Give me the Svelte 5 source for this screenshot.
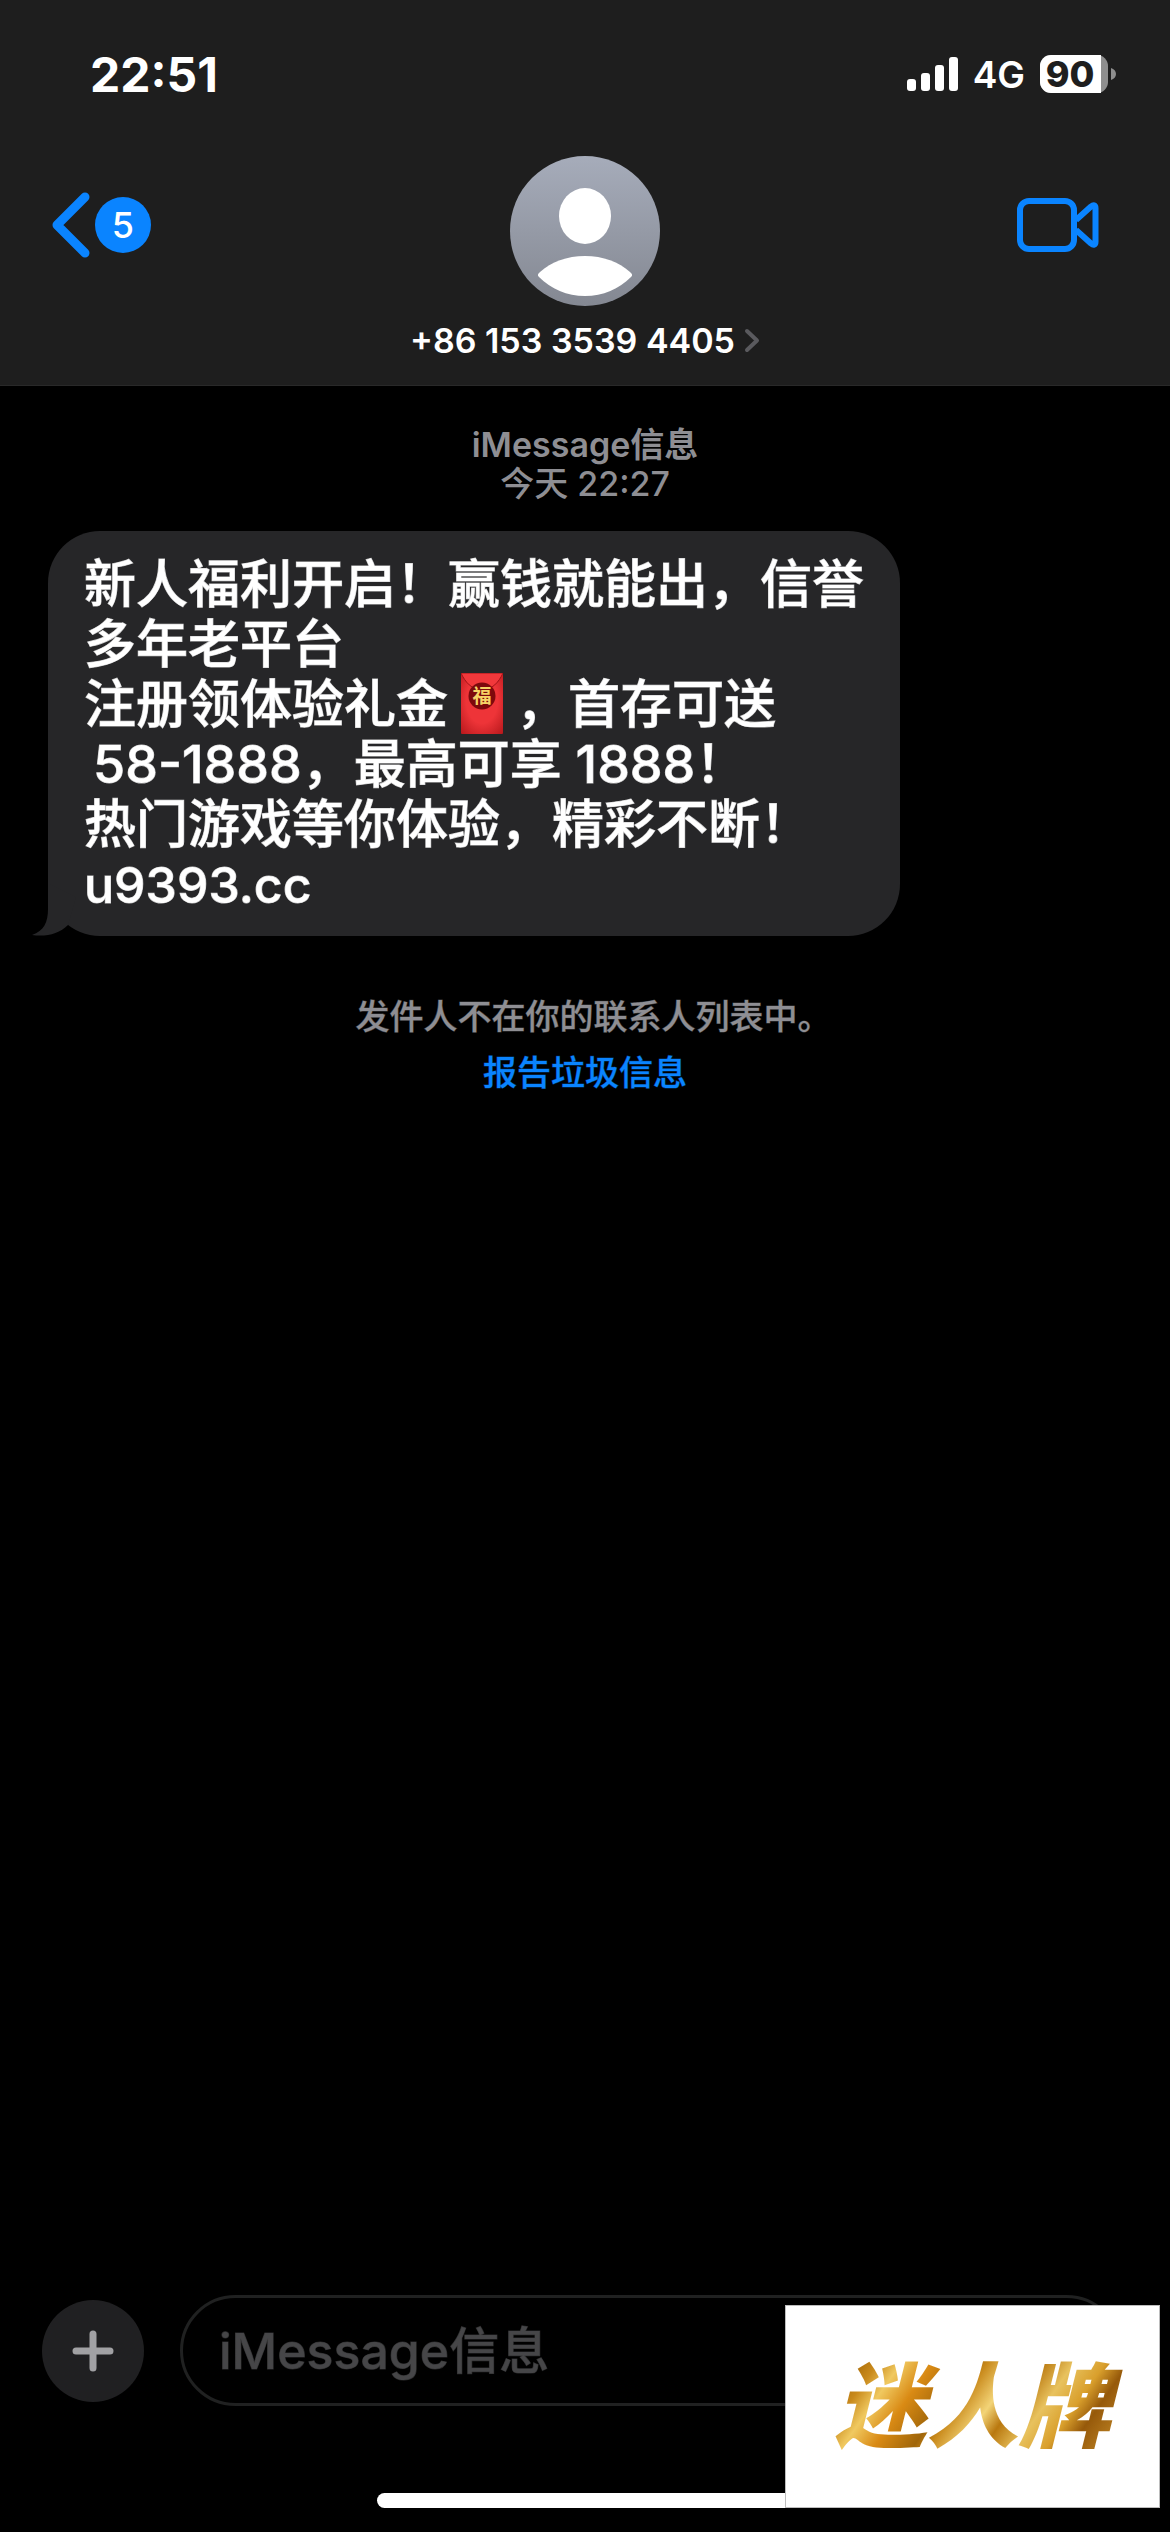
<script>
  let unread = 5;
  let battery = 90;
  let contact = "+86 153 3539 4405";
  let draft = "";

  // x offset and height of each signal bar
  const bars = [
    { x: 0, height: 12 },
    { x: 14, height: 18 },
    { x: 28, height: 26 },
    { x: 42, height: 34 },
  ];
</script>

<svelte:head>
  <title>{contact}</title>
</svelte:head>

<div class="screen" lang="zh-CN">
  <header>
    <div class="status">
      <time class="clock">22:51</time>
      <div class="indicators">
        <svg class="signal" width="51" height="34" viewBox="0 0 51 34" aria-hidden="true">
          {#each bars as bar}
            <rect x={bar.x} y={34 - bar.height} width="9" height={bar.height} rx="3" fill="#fff" />
          {/each}
        </svg>
        <span class="network">4G</span>
        <div class="battery">
          <div class="cell">
            <div class="charge" style="width: {battery}%"></div>
            <span class="level">{battery}</span>
          </div>
          <svg width="5" height="12" viewBox="0 0 5 12" aria-hidden="true">
            <path d="M0 0C3 1 5 3 5 6S3 11 0 12Z" fill="#8e8e8e" />
          </svg>
        </div>
      </div>
    </div>

    <nav>
      <button class="back" aria-label="返回">
        <svg width="40" height="66" viewBox="0 0 40 66" aria-hidden="true">
          <path
            d="M34 5 6 33 34 61"
            fill="none"
            stroke="#0a84ff"
            stroke-width="9"
            stroke-linecap="round"
            stroke-linejoin="round"
          />
        </svg>
        <span class="badge">{unread}</span>
      </button>

      <button class="contact">
        <svg class="avatar" width="150" height="150" viewBox="0 0 150 150" aria-hidden="true">
          <defs>
            <linearGradient id="avatar-fill" x1="0" y1="0" x2="0" y2="1">
              <stop offset="0" stop-color="#a6acba" />
              <stop offset="1" stop-color="#848892" />
            </linearGradient>
          </defs>
          <circle cx="75" cy="75" r="75" fill="url(#avatar-fill)" />
          <ellipse cx="75" cy="60" rx="26" ry="28" fill="#fff" />
          <path
            d="M29 121C27 119 28 118 30 116C41 106 57 100 75 100S109 106 120 116C122 118 123 119 121 121C109 133 93 140 75 140S41 133 29 121Z"
            fill="#fff"
          />
        </svg>
        <span class="name">
          {contact}
          <svg width="16" height="25" viewBox="0 0 16 25" aria-hidden="true">
            <path
              d="M3 3 13 12.500 3 22"
              fill="none"
              stroke="#5a5a5e"
              stroke-width="4"
              stroke-linecap="round"
              stroke-linejoin="round"
            />
          </svg>
        </span>
      </button>

      <button class="video" aria-label="视频通话">
        <svg width="82" height="54" viewBox="0 0 82 54" fill="none" stroke="#0a84ff" aria-hidden="true">
          <rect x="3" y="3" width="54" height="48" rx="9" stroke-width="6" />
          <path
            d="M59 22 74 8.500C76.500 6.500 78.500 7 78.500 10V44C78.500 47 76.500 47.500 74 45.500L59 32"
            stroke-width="6"
            stroke-linejoin="round"
          />
        </svg>
      </button>
    </nav>
  </header>

  <main>
    <p class="stamp"><strong>iMessage信息</strong><br />今天 22:27</p>

    <div class="bubble">
      <p>新人福利开启！赢钱就能出，信誉多年老平台</p>
      <p>
        注册领体验礼金<svg class="envelope" width="42" height="61" viewBox="0 0 42 61" role="img" aria-label="红包">
          <defs>
            <radialGradient id="envelope-fill" cx="0.5" cy="0.45" r="0.75">
              <stop offset="0.5" stop-color="#ee3438" />
              <stop offset="1" stop-color="#b5171b" />
            </radialGradient>
          </defs>
          <rect width="42" height="61" rx="1" fill="url(#envelope-fill)" />
          <path d="M0 0H42C38 9 31 17 21 17S4 9 0 0Z" fill="#f2383b" stroke="#a01216" stroke-width="1" />
          <circle cx="21" cy="23" r="13.500" fill="#7d090c" />
          <text x="21" y="30" text-anchor="middle">福</text>
        </svg>，首存可送
      </p>
      <p>&thinsp;58-1888，最高可享 1888！</p>
      <p>热门游戏等你体验，精彩不断！</p>
      <p class="domain">u9393.cc</p>
      <svg class="tail" width="44" height="53" viewBox="0 0 44 53" aria-hidden="true">
        <path d="M16 0V26C16 39 12 48 0 52C14 54 27 51 36 42L44 14Z" fill="#262628" />
      </svg>
    </div>

    <p class="notice">发件人不在你的联系人列表中<span class="stop">。</span></p>
    <a class="report" href="#report">报告垃圾信息</a>
  </main>

  <footer>
    <div class="composer">
      <button class="add" aria-label="添加">
        <svg width="42" height="42" viewBox="0 0 42 42" aria-hidden="true">
          <path d="M21 4V38M4 21H38" stroke="#a1a1a4" stroke-width="7" stroke-linecap="round" />
        </svg>
      </button>
      <input type="text" aria-label="信息" placeholder="iMessage信息" bind:value={draft} />
    </div>
    <div class="home"></div>
    <div class="sticker"><span>迷人牌</span></div>
  </footer>
</div>

<style>
  :global(body) {
    margin: 0;
    background: #000;
  }

  .screen {
    display: flex;
    flex-direction: column;
    min-height: 100vh;
    background: #000;
    color: #fff;
    font-family: Inter, "Noto Sans CJK SC", sans-serif;
    font-weight: 500;
  }

  p {
    margin: 0;
  }

  svg {
    display: block;
    flex: none;
  }

  button {
    padding: 0;
    border: none;
    background: none;
    color: inherit;
    font: inherit;
    cursor: pointer;
  }

  header {
    background: #1e1e1e;
    border-bottom: 1px solid #292929;
  }

  .status {
    display: flex;
    align-items: center;
    justify-content: space-between;
    height: 148px;
    padding: 0 54px 0 90px;
  }

  .clock {
    font-size: 48px;
    font-weight: 700;
  }

  .indicators {
    display: flex;
    align-items: center;
    gap: 15px;
  }

  .network {
    font-size: 37px;
    font-weight: 600;
  }

  .battery {
    display: flex;
    align-items: center;
    gap: 3px;
  }

  .cell {
    position: relative;
    width: 68px;
    height: 38px;
    border-radius: 11px;
    background: #8e8e8e;
  }

  .charge {
    height: 100%;
    border-radius: 11px 0 0 11px;
    background: #fff;
  }

  .level {
    position: absolute;
    inset: 0 8px 0 0;
    color: #1e1e1e;
    font-size: 36px;
    font-weight: 800;
    line-height: 38px;
    text-align: center;
  }

  nav {
    display: grid;
    grid-template-columns: 1fr auto 1fr;
    padding: 8px 0 25px;
  }

  .back,
  .video {
    display: flex;
    align-items: center;
    height: 138px;
  }

  .back {
    justify-self: start;
    gap: 4px;
    margin-left: 51px;
  }

  .video {
    justify-self: end;
    margin-right: 71px;
  }

  .badge {
    width: 56px;
    border-radius: 50%;
    background: #0a84ff;
    font-size: 36px;
    line-height: 56px;
    text-align: center;
  }

  .contact {
    display: flex;
    flex-direction: column;
    align-items: center;
    gap: 15px;
  }

  .name {
    display: flex;
    align-items: center;
    gap: 9px;
    font-size: 34px;
    font-weight: 600;
    line-height: 39px;
  }

  main {
    display: flex;
    flex: 1;
    flex-direction: column;
    align-items: center;
    padding: 39px 48px;
  }

  .stamp {
    margin-bottom: 28px;
    color: #8e8e93;
    font-size: 34px;
    line-height: 39px;
    text-align: center;
  }

  .stamp strong {
    font-weight: 600;
  }

  .bubble {
    position: relative;
    align-self: flex-start;
    box-sizing: border-box;
    max-width: 852px;
    padding: 24px 36px 21px;
    border-radius: 52px;
    background: #262628;
    font-size: 52px;
    line-height: 60px;
    -webkit-text-stroke: 1px rgba(255, 255, 255, 0.7);
  }

  .domain {
    font-size: 50px;
  }

  .envelope {
    display: inline-block;
    margin: -4px 13px;
    vertical-align: -7px;
  }

  .envelope text {
    fill: #f6d365;
    font-size: 19px;
    font-weight: 700;
    -webkit-text-stroke: 0;
  }

  .tail {
    position: absolute;
    bottom: 0;
    left: -16px;
  }

  .notice,
  .report {
    font-size: 34px;
    line-height: 40px;
    white-space: nowrap;
  }

  .notice {
    margin: 61px 0 16px;
    color: #8e8e93;
    -webkit-text-stroke: 1px rgba(142, 142, 147, 0.4);
  }

  /* the full stop counts as half width when the line is centred */
  .stop {
    margin-right: -17px;
  }

  .report {
    color: #0a84ff;
    text-decoration: none;
    -webkit-text-stroke: 1px rgba(10, 132, 255, 0.4);
  }

  footer {
    position: relative;
    padding-bottom: 24px;
  }

  .composer {
    display: flex;
    align-items: center;
    gap: 36px;
    padding: 0 48px 0 42px;
  }

  .add {
    display: flex;
    flex: none;
    align-items: center;
    justify-content: center;
    width: 102px;
    height: 102px;
    border-radius: 50%;
    background: #202022;
  }

  input {
    box-sizing: border-box;
    flex: 1;
    min-width: 0;
    height: 111px;
    padding: 0 36px;
    border: 3px solid #202121;
    border-radius: 56px;
    background: none;
    color: #fff;
    font: inherit;
    font-size: 50px;
  }

  input::placeholder {
    color: #464648;
    opacity: 1;
    -webkit-text-stroke: 1px rgba(70, 70, 72, 0.6);
  }

  .home {
    width: 416px;
    height: 15px;
    margin: 87px auto 0;
    border-radius: 8px;
    background: #fff;
  }

  .sticker {
    position: absolute;
    right: 10px;
    bottom: 24px;
    display: flex;
    align-items: center;
    justify-content: center;
    box-sizing: border-box;
    width: 375px;
    height: 203px;
    border: 1px solid #bdbdbd;
    background: #fff;
  }

  .sticker span {
    padding: 0 16px;
    background: linear-gradient(
      125deg,
      #a86a08 0%,
      #a86a08 12%,
      #c98a1c 18%,
      #f0c960 24%,
      #d98a14 32%,
      #a0660a 42%,
      #c98a1c 46%,
      #f3d477 54%,
      #b9780f 60%,
      #e8c25e 68%,
      #d99f2c 76%,
      #96590a 82%,
      #d8a036 100%
    );
    background-clip: text;
    -webkit-background-clip: text;
    color: transparent;
    font-size: 92px;
    font-style: italic;
    font-weight: 900;
    line-height: 120px;
  }
</style>
